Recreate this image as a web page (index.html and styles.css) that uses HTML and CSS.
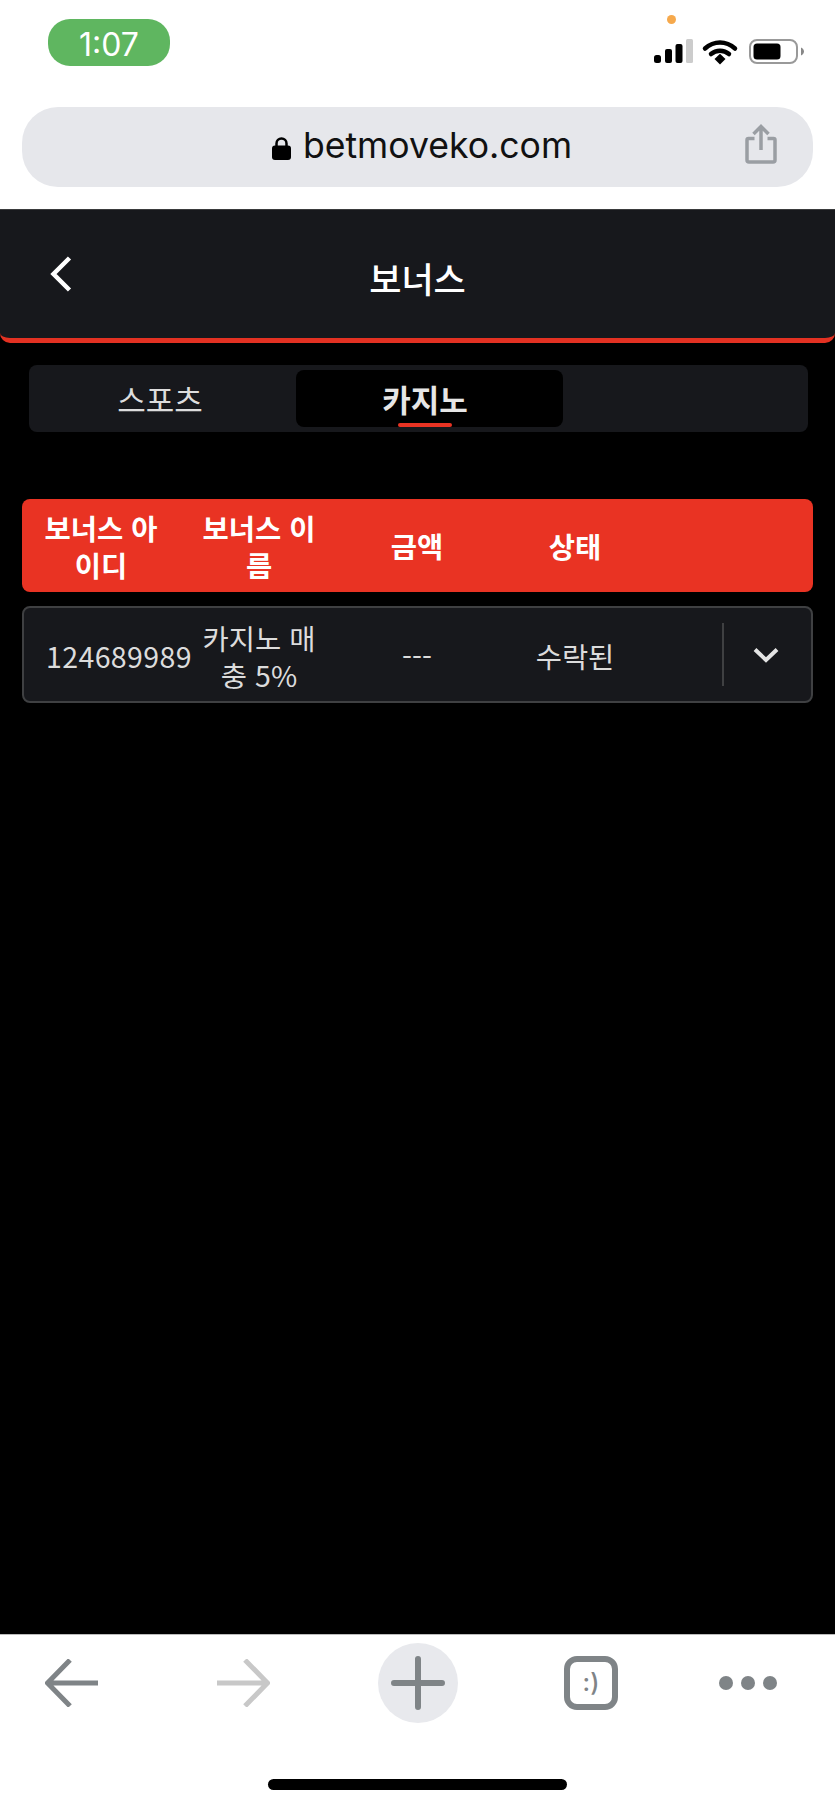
FILE: index.html
```html
<!DOCTYPE html>
<html lang="ko">
<head>
<meta charset="utf-8">
<title>보너스</title>
<link rel="stylesheet" href="styles.css">
</head>
<body>
<div class="phone">
  <div class="statusbar">
    <div class="time">1:07</div>
    <span class="mic-dot"></span>
    <svg class="status-icons" width="150" height="26" viewBox="0 0 150 26">
      <rect x="0" y="16" width="7" height="8" rx="2.5" fill="#000"/>
      <rect x="11" y="10" width="7" height="14" rx="2" fill="#000"/>
      <rect x="21.500" y="5" width="7" height="19" rx="2" fill="#000"/>
      <rect x="32" y="0" width="7" height="24" rx="1.500" fill="#ccc"/>
      <path d="M51 9.500C60 1.500 72 1.500 81 9.500" fill="none" stroke="#000" stroke-width="4.500" stroke-linecap="round"/>
      <path d="M57 15C62 10.500 70 10.500 75 15" fill="none" stroke="#000" stroke-width="4.500" stroke-linecap="round"/>
      <path d="M60.500 20L66 14.800L71.500 20L66 25.500Z" fill="#000"/>
      <rect x="96" y="1" width="47" height="23" rx="7" fill="none" stroke="#999" stroke-width="2"/>
      <rect x="99.500" y="4.500" width="27" height="16" rx="3.500" fill="#000"/>
      <path d="M147 8.500C149 9.500 150 11 150 12.500C150 14 149 15.500 147 16.500Z" fill="#888"/>
    </svg>
  </div>

  <div class="urlbar">
    <svg class="lock" width="19" height="23" viewBox="0 0 19 23">
      <path d="M4.500 10V6.500a5 5 0 0 1 10 0V10" fill="none" stroke="#000" stroke-width="2.500"/>
      <rect x="0" y="8.500" width="19" height="14.500" rx="3" fill="#000"/>
    </svg>
    <span class="domain">betmoveko.com</span>
    <svg class="share" width="32" height="40" viewBox="0 0 32 40">
      <path d="M16 26V3M8.500 10L16 2.500L23.500 10" fill="none" stroke="#9a9ea3" stroke-width="3.500"/>
      <path d="M9.500 14.500H3.500a1.500 1.500 0 0 0-1.500 1.500V36a2 2 0 0 0 2 2H28a2 2 0 0 0 2-2V16a1.500 1.500 0 0 0-1.500-1.500H22.500" fill="none" stroke="#9a9ea3" stroke-width="3.500"/>
    </svg>
  </div>

  <main class="page">
    <header class="titlebar">
      <svg class="back" width="22" height="36" viewBox="0 0 22 36">
        <path d="M19.500 2L3.500 18L19.500 34" fill="none" stroke="#fff" stroke-width="4.500"/>
      </svg>
      <h1 class="title">보너스</h1>
      <span></span>
    </header>

    <nav class="tabs">
      <div class="tab">스포츠</div>
      <div class="tab tab-active">카지노</div>
    </nav>

    <div class="table-head">
      <div class="cell">보너스 아이디</div>
      <div class="cell">보너스 이름</div>
      <div class="cell">금액</div>
      <div class="cell">상태</div>
    </div>

    <div class="table-row">
      <div class="cell cell-first">124689989</div>
      <div class="cell">카지노 매충 5%</div>
      <div class="cell">---</div>
      <div class="cell">수락된</div>
      <div class="expand">
        <svg width="26" height="16" viewBox="0 0 26 16">
          <path d="M2 2.500L13 13L24 2.500" fill="none" stroke="#e4e4e4" stroke-width="4"/>
        </svg>
      </div>
    </div>
  </main>

  <footer class="toolbar">
    <div class="nav-icons">
      <svg class="ic ic-back" width="53" height="48" viewBox="0 0 53 48">
        <path d="M25 1L2.500 24L25 47M2.500 24H53" fill="none" stroke="#7f8487" stroke-width="5"/>
      </svg>
      <svg class="ic ic-forward" width="53" height="48" viewBox="0 0 53 48">
        <path d="M28 1L50.500 24L28 47M50.500 24H0" fill="none" stroke="#c8c8c8" stroke-width="5"/>
      </svg>
      <div class="ic ic-plus">
        <svg width="54" height="54" viewBox="0 0 54 54">
          <path d="M27 3V51M3 27H51" fill="none" stroke="#7f8487" stroke-width="6" stroke-linecap="round"/>
        </svg>
      </div>
      <div class="ic ic-tabs">:)</div>
      <div class="ic ic-more"><i></i><i></i><i></i></div>
    </div>
    <div class="home-bar"></div>
  </footer>
</div>
</body>
</html>
```

FILE: styles.css
```css
* { box-sizing: border-box; }
html, body { margin: 0; padding: 0; background: #000; }
body { font-family: "Noto Sans CJK KR", "Noto Sans", sans-serif; }

.phone { width: 835px; height: 1808px; display: flex; flex-direction: column; background: #fff; overflow: hidden; }

.statusbar { position: relative; height: 107px; display: flex; justify-content: space-between; align-items: flex-start; padding: 19px 31px 0 48px; }
.time { width: 122px; height: 47px; padding-top: 2px; border-radius: 22px; background: #5fb660; color: #fff; font: 400 32px/47px Inter, sans-serif; text-align: center; }
.mic-dot { position: absolute; left: 667px; top: 15px; width: 9px; height: 9px; border-radius: 50%; background: #f6a94c; }
.status-icons { margin-top: 20px; }

.urlbar { position: relative; height: 80px; margin: 0 22px; border-radius: 36px; background: #e6e7eb; display: flex; align-items: center; justify-content: center; gap: 12px; padding-left: 9px; }
.lock { margin-top: 2px; }
.domain { margin-top: -2px; font: 400 35.600px/44px Inter, sans-serif; color: #111; }
.share { position: absolute; right: 36px; top: 17px; }

.page { flex: 1; margin-top: 22px; background: #000; display: flex; flex-direction: column; border-top: 1px solid #3a3b3d; }

.titlebar { height: 133px; background: #17181c; border-bottom: 5px solid #e33122; border-radius: 0 0 10px 10px; display: grid; grid-template-columns: 1fr auto 1fr; align-items: center; padding: 0 0 10px 50px; }
.back { margin-top: 9px; }
.title { margin: 18px 0 0; font-size: 35px; font-weight: 500; line-height: 44px; color: #fff; transform: translateX(-25px); }

.tabs { display: flex; height: 67px; margin: 22px 27px 0 29px; padding: 5px 0; border-radius: 8px; background: #17181c; }
.tab { width: 262px; font-size: 31px; line-height: 57px; text-align: center; color: #ddd; }
.tab-active { position: relative; width: 267px; margin-left: 5px; padding-right: 9px; border-radius: 8px; background: #000; font-weight: 700; color: #e6e6e6; }
.tab-active::after { content: ""; position: absolute; left: 102px; bottom: 0; width: 54px; height: 4px; border-radius: 2px; background: #e93323; }

.table-head, .table-row { margin: 0 22px; display: grid; align-items: center; text-align: center; }
.table-head { height: 93px; margin-top: 67px; border-radius: 8px; background: #e93323; color: #fff; font-size: 28.500px; font-weight: 700; line-height: 37px; grid-template-columns: 158px 158px 158px 158px; }
.table-row { height: 97px; margin-top: 14px; border: 2px solid #3f4042; border-radius: 8px; background: #17181c; color: #dcdcdc; font-size: 28.500px; line-height: 37px; grid-template-columns: 156px 158px 158px 158px 1fr; }
.table-row .cell { padding-top: 2px; }
.cell { padding: 0 20px; }
.table-row .cell-first { padding-left: 22px; letter-spacing: 0.400px; }
.expand { justify-self: end; width: 89px; height: 63px; border-left: 2px solid #3f4042; display: flex; align-items: center; justify-content: center; }
.expand svg { margin-left: -3px; margin-top: 1px; }

.toolbar { height: 174px; background: #fff; border-top: 1px solid #bbb; display: flex; flex-direction: column; align-items: stretch; }
.nav-icons { display: flex; align-items: center; height: 80px; margin-top: 8px; padding-left: 45px; }
.ic-forward { margin-left: 119px; }
.ic-plus { margin-left: 108px; width: 80px; height: 80px; border-radius: 50%; background: #e8e9ed; display: flex; align-items: center; justify-content: center; }
.ic-tabs { margin-left: 106px; width: 54px; height: 54px; border: 6px solid #7f8487; border-radius: 13px; color: #7f8487; font: 500 25px/40px Inter, sans-serif; text-align: center; }
.ic-more { margin-left: 101px; width: 58px; display: flex; justify-content: space-between; }
.ic-more i { width: 14px; height: 14px; border-radius: 50%; background: #7f8487; }
.home-bar { width: 299px; height: 11px; margin: 56px auto 0; border-radius: 6px; background: #000; }
```
